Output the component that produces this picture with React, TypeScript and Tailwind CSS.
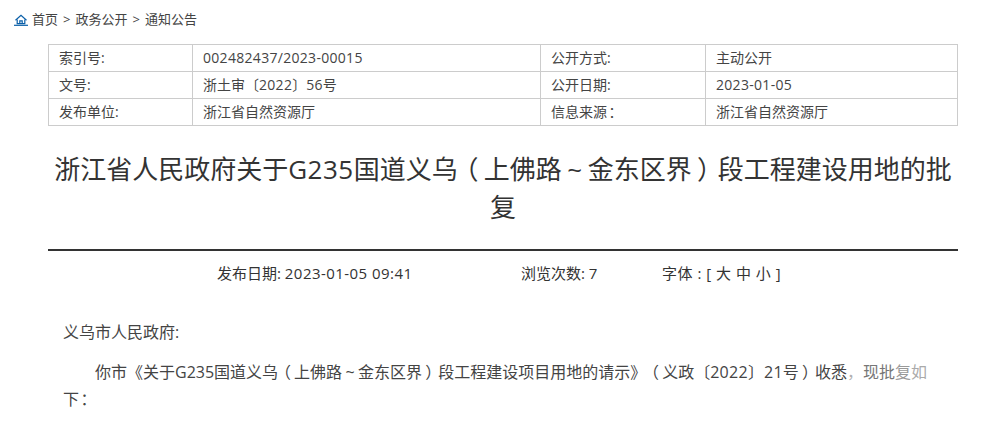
import React from "react";

const FONT = "font-['Open_Sans','Noto_Sans_CJK_SC',sans-serif]";

// full-width punctuation sits centred in its em box in the reference
const Fw = ({ c, shift = "" }: { c: string; shift?: string }) => (
  <span className={`inline-block w-[1em] indent-0 text-center ${shift}`}>{c}</span>
);
const Lp = () => <Fw c="（" shift="-translate-x-[0.2em]" />;
const Rp = () => <Fw c="）" shift="translate-x-[0.2em]" />;
const Colon = () => <Fw c="：" shift="translate-x-[0.1em]" />;

const Num = ({ children }: { children: React.ReactNode }) => (
  <span className="tracking-[0.3px]">{children}</span>
);

const rows: React.ReactNode[][] = [
  ["索引号:", <Num>002482437/2023-00015</Num>, "公开方式:", "主动公开"],
  [
    "文号:",
    <>
      浙土审<Fw c="〔" />
      <Num>2022</Num>
      <Fw c="〕" />
      <Num>56</Num>号
    </>,
    "公开日期:",
    <Num>2023-01-05</Num>,
  ],
  [
    "发布单位:",
    "浙江省自然资源厅",
    <>
      信息来源
      <Colon />
    </>,
    "浙江省自然资源厅",
  ],
];

const HomeIcon = () => (
  <svg width="14" height="12" viewBox="0 0 14 12" fill="none" stroke="#0a5fa8" strokeWidth="1.2">
    <path d="M1.5 6.2 7 1.2l5.500 5" />
    <path d="M3.200 5.500v4.200h7.600V5.500" />
    <path d="M5.800 9.700V6.800h2.400v2.900" />
    <path d="M0 11.300h14" />
  </svg>
);

const App: React.FC = () => {
  return (
    <div className={`h-[426px] w-[988px] overflow-hidden bg-white text-[#333] ${FONT}`}>
      <div className="flex h-[44px] items-start pl-[14px] pt-[11px] text-[13px] leading-[16px] text-[#444]">
        <span className="mt-[3px] mr-[4px]">
          <HomeIcon />
        </span>
        <span>首页</span>
        <span className="mx-[5px]">&gt;</span>
        <span>政务公开</span>
        <span className="mx-[5px]">&gt;</span>
        <span>通知公告</span>
      </div>

      <div className="ml-[48px] w-[910px]">
        <table className="w-[909px] table-fixed border-collapse text-[14px] leading-[20px] text-[#444]">
          <colgroup>
            <col className="w-[144px]" />
            <col className="w-[348px]" />
            <col className="w-[165px]" />
            <col className="w-[252px]" />
          </colgroup>
          <tbody>
            {rows.map((row, i) => (
              <tr key={i} className="h-[27px]">
                {row.map((cell, j) => (
                  <td key={j} className="border border-[#cccccc] px-[10px] py-0 whitespace-nowrap">
                    {cell}
                  </td>
                ))}
              </tr>
            ))}
          </tbody>
        </table>

        <h1 className="mt-[24px] border-b-2 border-[#333] pb-[23px] text-center text-[26px] leading-[38px] font-normal text-[#333]">
          浙江省人民政府关于<span className="tracking-[0.5px]">G235</span>国道义乌
          <Lp />
          上佛路
          <Fw c="~" />
          金东区界
          <Rp />
          段工程建设用地的批复
        </h1>

        <div className="mt-[12px] flex h-[20px] text-[15px] leading-[20px] text-[#333]">
          <span className="ml-[169px] w-[304px]">
            发布日期: <span className="tracking-[0.45px]">2023-01-05 09:41</span>
          </span>
          <span className="w-[141px]">
            浏览次数: <Num>7</Num>
          </span>
          <span className="tracking-[0.5px]">字体 : [ 大 中 小 ]</span>
        </div>

        <div className="mt-[36px] px-[15px] text-[16px] leading-[27px] text-[#444]">
          <p>义乌市人民政府:</p>
          <p className="mt-[13px] indent-[32px]">
            你市《关于G235国道义乌
            <Lp />
            上佛路
            <Fw c="~" />
            金东区界
            <Rp />
            段工程建设项目用地的请示》
            <Lp />
            义政
            <Fw c="〔" />
            <Num>2022</Num>
            <Fw c="〕" />
            <Num>21</Num>号
            <Rp />
            收悉
            <span className="text-[#b0b0b0]">，</span>
            <span className="text-[#777]">现批</span>
            <span className="text-[#999]">复</span>
            <span className="text-[#aaa]">如</span>
            <br />下
            <Colon />
          </p>
        </div>
      </div>
    </div>
  );
};

export default App;
